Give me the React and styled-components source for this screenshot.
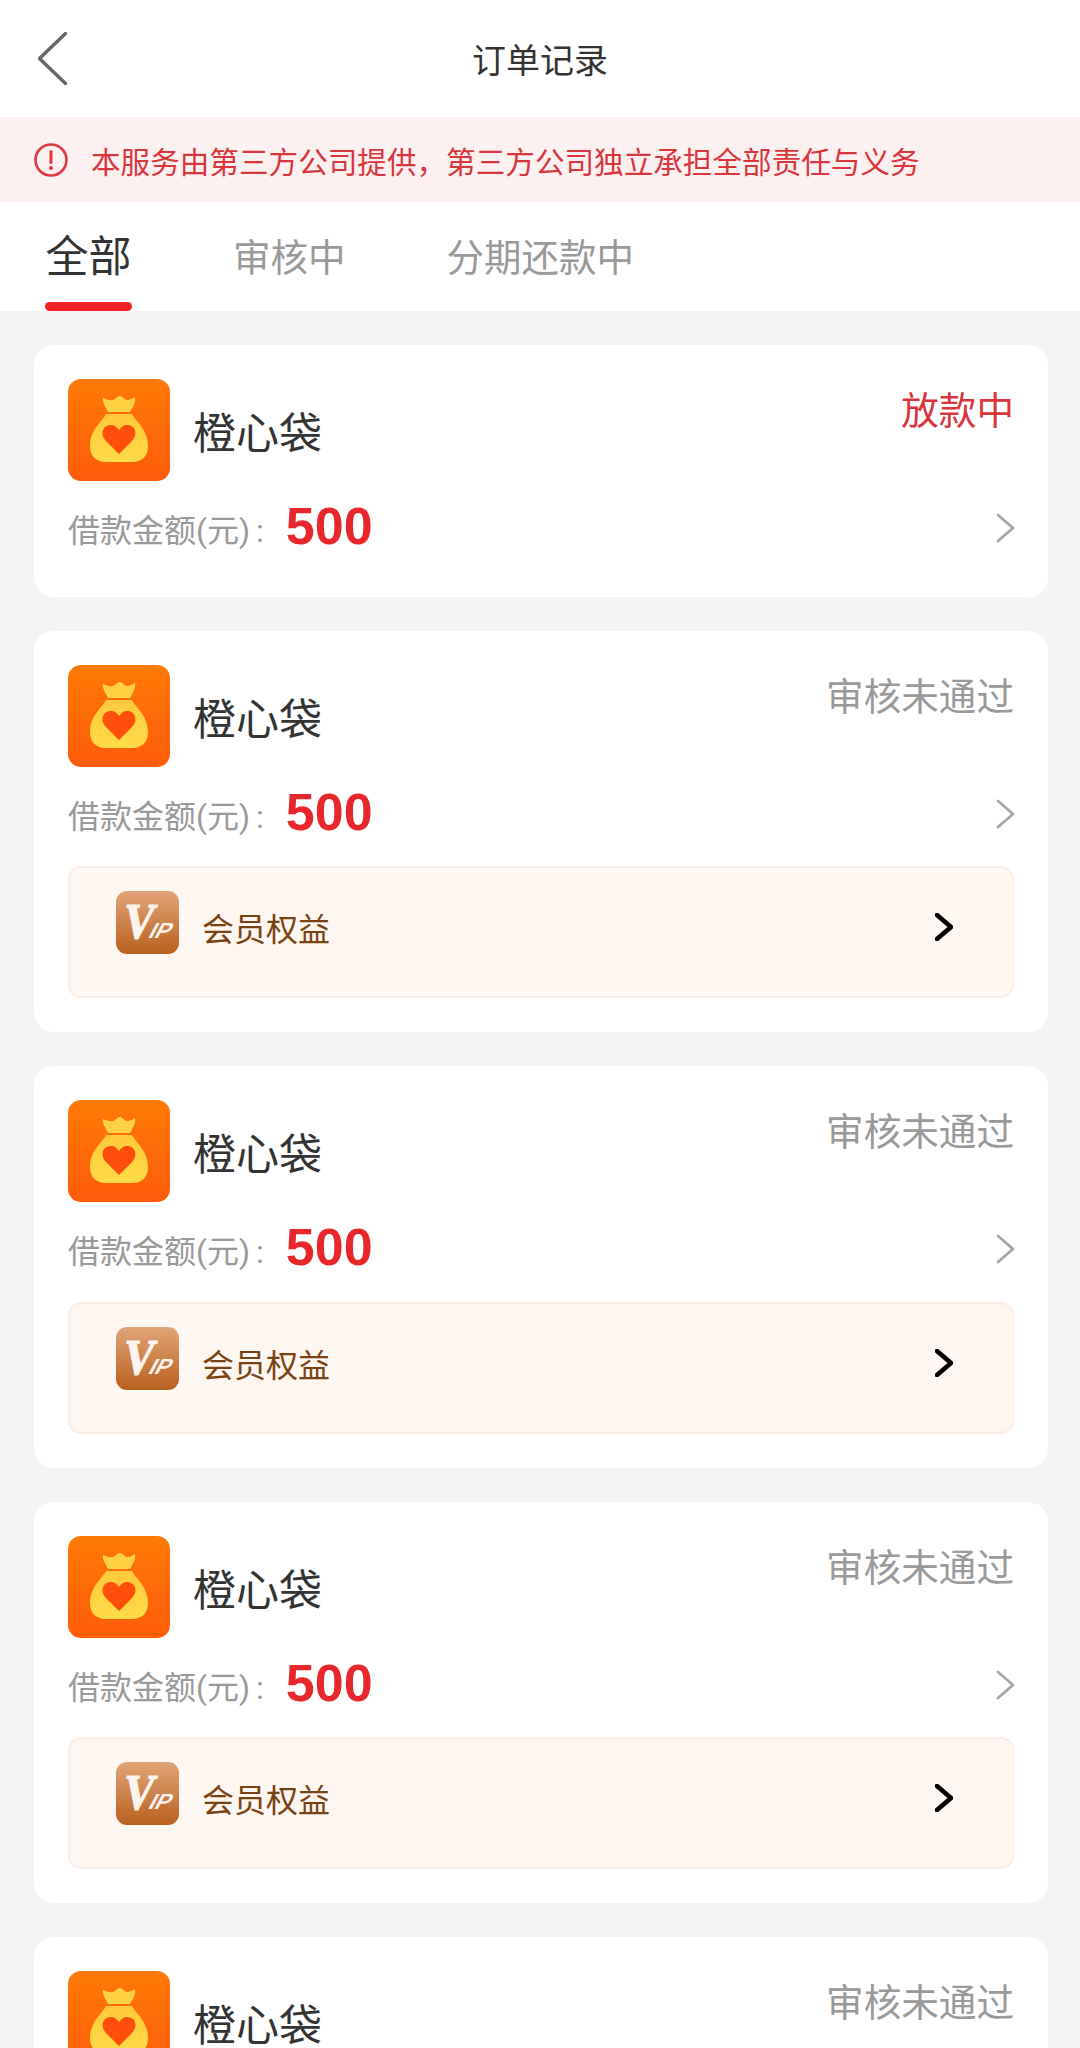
import React from "react";
import styled, { createGlobalStyle } from "styled-components";

const GlobalStyle = createGlobalStyle`
  html, body {
    margin: 0;
    padding: 0;
    background: #f4f4f4;
  }
  * {
    box-sizing: border-box;
  }
`;

const orders = [
  { id: 1, status: "放款中", pending: true },
  { id: 2, status: "审核未通过", vip: true },
  { id: 3, status: "审核未通过", vip: true },
  { id: 4, status: "审核未通过", vip: true },
  { id: 5, status: "审核未通过", vip: true },
];

const tabs = ["全部", "审核中", "分期还款中"];

const BagIcon = () => (
  <svg width="102" height="102" viewBox="0 0 102 102">
    <defs>
      <linearGradient id="bagBg" x1="0" y1="0" x2="0" y2="1">
        <stop offset="0" stopColor="#ff7a06" />
        <stop offset="1" stopColor="#ff5c0a" />
      </linearGradient>
      <linearGradient id="bagBody" x1="0" y1="0" x2="0" y2="1">
        <stop offset="0" stopColor="#ffc93a" />
        <stop offset="1" stopColor="#ffdd48" />
      </linearGradient>
    </defs>
    <rect width="102" height="102" rx="13" fill="url(#bagBg)" />
    <path
      d="M35 19C38 20 42 22 45 21C48 20 49 17 52 17C55 17 56 21 59 21C62 21 65 19 67 18C68 23 65 28 62 33H40C38 28 34 24 35 19Z"
      fill="#ffd245"
    />
    <path
      d="M38 35H64C67 42 80 50 80 67C80 78 73 83 64 83H38C29 83 22 78 22 67C22 50 35 42 38 35Z"
      fill="url(#bagBody)"
    />
    <path
      d="M51 75L38 62C32 56 34 46 43 46C47 46 49 48 51 51C53 48 55 46 59 46C68 46 70 56 64 62Z"
      fill="#ff4f0a"
    />
  </svg>
);

const VipIcon = () => (
  <svg width="63" height="63" viewBox="0 0 63 63">
    <defs>
      <linearGradient id="vipBg" x1="0" y1="0" x2="0" y2="1">
        <stop offset="0" stopColor="#e0a578" />
        <stop offset="1" stopColor="#b9601e" />
      </linearGradient>
    </defs>
    <rect width="63" height="63" rx="11" fill="url(#vipBg)" />
    <text
      x="0"
      y="0"
      transform="translate(5 47) skewX(-10) scale(0.86 1)"
      fontFamily="'Liberation Serif', serif"
      fontWeight="700"
      fontSize="50"
      fill="#fbf3ec"
      stroke="#fbf3ec"
      strokeWidth="1.4"
    >
      V
    </text>
    <text
      x="0"
      y="0"
      transform="translate(31 47) skewX(-28)"
      fontFamily="'Liberation Sans', sans-serif"
      fontWeight="700"
      fontSize="22"
      fill="#fbf3ec"
    >
      IP
    </text>
  </svg>
);

const AlertIcon = () => (
  <svg width="34" height="34" viewBox="0 0 34 34">
    <circle cx="17" cy="17" r="15.5" fill="none" stroke="#e0383e" strokeWidth="2.6" />
    <path d="M17 8.5V19.5" stroke="#e0383e" strokeWidth="3" strokeLinecap="round" />
    <circle cx="17" cy="25" r="2" fill="#e0383e" />
  </svg>
);

const Chevron = ({ left, color, width, w, h }) => (
  <svg width={w} height={h} viewBox={`0 0 ${w} ${h}`}>
    <path
      d={
        left
          ? `M${w - 1.5} 1.5L1.5 ${h / 2}L${w - 1.5} ${h - 1.5}`
          : `M2 2L${w - 2} ${h / 2}L2 ${h - 2}`
      }
      fill="none"
      stroke={color}
      strokeWidth={width}
      strokeLinecap="round"
      strokeLinejoin="round"
    />
  </svg>
);

export default function App() {
  return (
    <Page>
      <GlobalStyle />
      <Header>
        <BackButton>
          <Chevron left color="#666666" width={3.4} w={29} h={53} />
        </BackButton>
        <Title>订单记录</Title>
      </Header>
      <Notice>
        <AlertIcon />
        <NoticeText>本服务由第三方公司提供，第三方公司独立承担全部责任与义务</NoticeText>
      </Notice>
      <TabBar>
        {tabs.map((tab, index) => (
          <Tab key={tab} $active={index === 0}>
            {tab}
          </Tab>
        ))}
      </TabBar>
      <OrderList>
        {orders.map((order) => (
          <Card key={order.id}>
            <CardTop>
              <BagIcon />
              <Name>橙心袋</Name>
              <Status $pending={order.pending}>{order.status}</Status>
            </CardTop>
            <AmountRow>
              <AmountLabel>
                借款金额(元)<Colon>:</Colon>
              </AmountLabel>
              <Amount>500</Amount>
              <AmountArrow>
                <Chevron color="#a6a6a6" width={2.8} w={19} h={30} />
              </AmountArrow>
            </AmountRow>
            {order.vip && (
              <VipBox>
                <VipIcon />
                <VipText>会员权益</VipText>
                <VipArrow>
                  <Chevron color="#000000" width={4.6} w={18} h={28} />
                </VipArrow>
              </VipBox>
            )}
          </Card>
        ))}
      </OrderList>
    </Page>
  );
}

const Page = styled.div`
  width: 1080px;
  height: 2048px;
  overflow: hidden;
  background: #f4f4f4;
  font-family: Roboto, "Noto Sans CJK SC", sans-serif;
`;

const Header = styled.div`
  display: grid;
  grid-template-columns: 1fr auto 1fr;
  align-items: center;
  height: 117px;
  padding: 0 38px;
  background: #ffffff;
`;

const BackButton = styled.div`
  display: flex;
  align-items: center;
  height: 53px;
`;

const Title = styled.div`
  font-size: 34px;
  color: #333333;
`;

const Notice = styled.div`
  display: flex;
  align-items: center;
  gap: 23px;
  height: 85px;
  padding: 0 34px;
  background: #fdf0f0;
`;

const NoticeText = styled.div`
  margin-top: 2px;
  font-size: 29.6px;
  color: #d9353c;
  white-space: nowrap;
`;

const TabBar = styled.div`
  display: flex;
  gap: 101px;
  height: 109px;
  padding-left: 45px;
  background: #ffffff;
`;

const Tab = styled.div`
  position: relative;
  height: 109px;
  padding: ${(p) => (p.$active ? "25px 0.5px 0" : "26px 0 0")};
  font-size: ${(p) => (p.$active ? "43px" : "37.5px")};
  line-height: 60px;
  color: ${(p) => (p.$active ? "#333333" : "#999999")};

  &::after {
    content: "";
    display: ${(p) => (p.$active ? "block" : "none")};
    position: absolute;
    left: 0;
    right: 0;
    bottom: 0;
    height: 9px;
    border-radius: 5px;
    background: #ee2222;
  }
`;

const OrderList = styled.div`
  display: flex;
  flex-direction: column;
  gap: 34px;
  padding: 34px 32px 34px 34px;
`;

const Card = styled.div`
  flex-shrink: 0;
  padding: 34px;
  border-radius: 20px;
  background: #ffffff;
`;

const CardTop = styled.div`
  display: flex;
  align-items: flex-start;
  height: 102px;
`;

const Name = styled.div`
  align-self: center;
  margin-left: 23px;
  font-size: 43px;
  color: #333333;
`;

const Status = styled.div`
  margin-left: auto;
  margin-top: 2px;
  font-size: 37.6px;
  line-height: 60px;
  color: ${(p) => (p.$pending ? "#d9353c" : "#999999")};
`;

const AmountRow = styled.div`
  display: flex;
  align-items: center;
  height: 82px;
  padding-top: 18px;
`;

const AmountLabel = styled.div`
  margin-top: -6px;
  font-size: 32px;
  color: #999999;
`;

const Colon = styled.span`
  margin-left: 6px;
`;

const Amount = styled.div`
  margin-left: 22px;
  margin-top: -10px;
  font-family: "Liberation Sans", sans-serif;
  font-size: 52px;
  font-weight: 700;
  color: #e8272c;
`;

const AmountArrow = styled.div`
  display: flex;
  margin-left: auto;
  margin-right: -1px;
  margin-top: -6px;
`;

const VipBox = styled.div`
  display: flex;
  align-items: flex-start;
  height: 132px;
  margin-top: 17.4px;
  padding: 23px 59px 0 46px;
  border: 2px solid #f9ede5;
  border-radius: 13px;
  background: #fdf6f1;
`;

const VipText = styled.div`
  margin-left: 23px;
  margin-top: 17px;
  font-size: 32px;
  line-height: 44px;
  color: #7a4210;
`;

const VipArrow = styled.div`
  display: flex;
  margin-left: auto;
  margin-top: 22px;
`;
